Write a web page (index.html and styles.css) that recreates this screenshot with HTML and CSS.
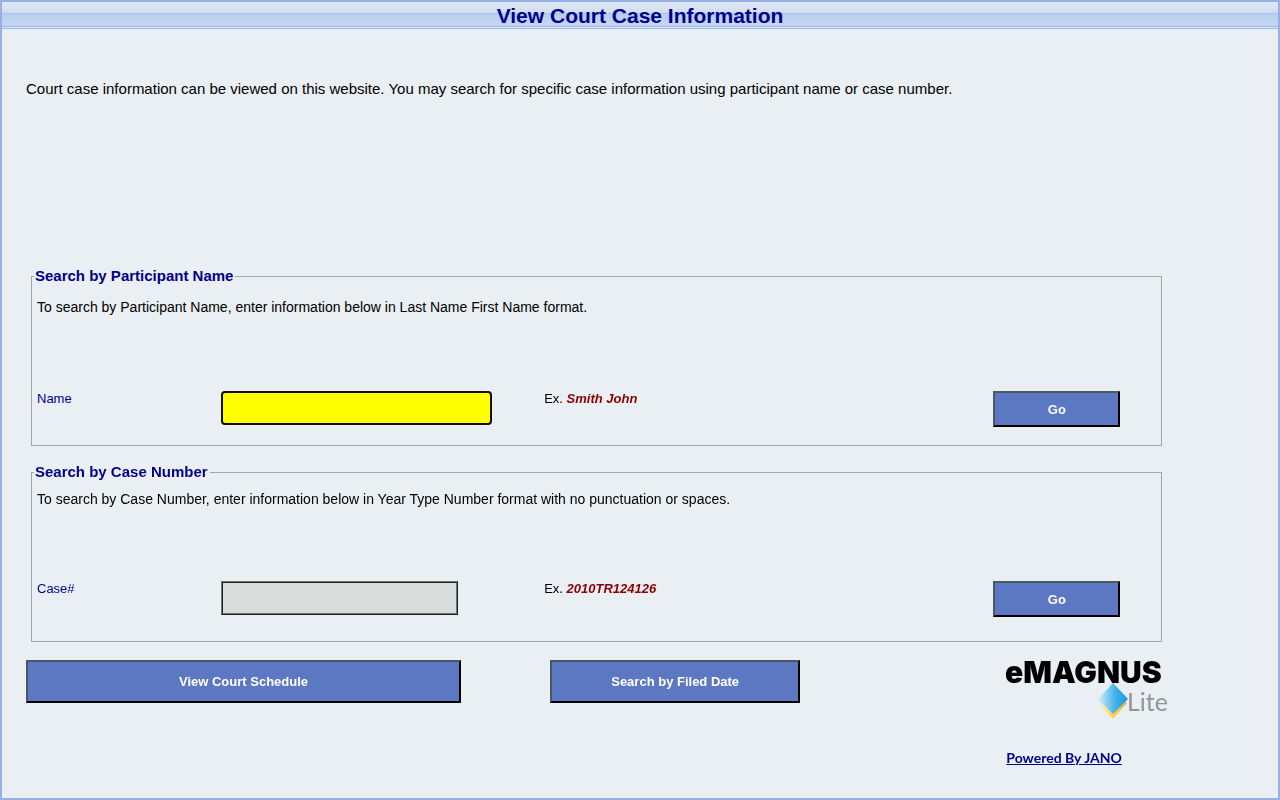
FILE: index.html
```html
<!DOCTYPE html>
<html lang="en">
<head>
    <meta charset="UTF-8">
    <meta name="viewport" content="width=device-width, initial-scale=1.0">
    <title>View Court Case Information</title>
    <link rel="stylesheet" href="styles.css">
</head>
<body>
    <div class="page">
        <header class="title-bar">
            <h1>View Court Case Information</h1>
        </header>
        <main class="content">
            <p class="intro">Court case information can be viewed on this website. You may search for specific case information using participant name or case number.</p>

            <form onsubmit="return false">
                <fieldset class="search">
                    <legend>Search by Participant Name</legend>
                    <p class="help">To search by Participant Name, enter information below in Last Name First Name format.</p>
                    <div class="row">
                        <label for="name">Name</label>
                        <input class="field name-field" type="text" id="name" autocomplete="off" autofocus>
                        <span>Ex. <em class="example">Smith John</em></span>
                        <button class="btn go" type="submit">Go</button>
                    </div>
                </fieldset>
            </form>

            <form onsubmit="return false">
                <fieldset class="search search-case">
                    <legend>Search by Case Number</legend>
                    <p class="help">To search by Case Number, enter information below in Year Type Number format with no punctuation or spaces.</p>
                    <div class="row">
                        <label for="case">Case#</label>
                        <input class="field case-field" type="text" id="case" autocomplete="off">
                        <span>Ex. <em class="example">2010TR124126</em></span>
                        <button class="btn go" type="submit">Go</button>
                    </div>
                </fieldset>
            </form>

            <div class="footer">
                <button class="btn schedule" type="button">View Court Schedule</button>
                <button class="btn filed" type="button">Search by Filed Date</button>
                <div class="brand">
                    <svg class="logo" width="164" height="65" viewBox="0 0 164 65" role="img" aria-label="eMAGNUS Lite">
                        <defs>
                            <linearGradient id="blue" x1="0" y1="0" x2="1" y2="0">
                                <stop offset="0" stop-color="#d9edf8"/>
                                <stop offset="0.55" stop-color="#45b5ee"/>
                                <stop offset="1" stop-color="#1496e4"/>
                            </linearGradient>
                            <linearGradient id="gold" x1="0" y1="0" x2="1" y2="0">
                                <stop offset="0" stop-color="#eaeff3"/>
                                <stop offset="0.5" stop-color="#ffd83c"/>
                                <stop offset="1" stop-color="#e5b84c"/>
                            </linearGradient>
                        </defs>
                        <path d="M107 27 L121 43 L107 59 L92 43 Z" fill="url(#gold)"/>
                        <path d="M107 23 L122 39 L107 54 L92 39 Z" fill="url(#blue)"/>
                        <text class="logo-name" x="-1" y="23">eMAGNUS</text>
                        <text class="logo-lite" x="121" y="51">Lite</text>
                    </svg>
                    <a class="powered" href="#">Powered By JANO</a>
                </div>
            </div>
        </main>
    </div>
</body>
</html>
```
FILE: styles.css
```css
* {
    box-sizing: border-box;
}

body {
    margin: 0;
    font-family: "Liberation Sans", Arial, sans-serif;
    font-size: 13px;
    line-height: 16px;
    color: #000;
    background-color: #eaeff3;
}

.page {
    min-height: 100vh;
    border: 2px solid #97afe5;
}

.title-bar {
    height: 27px;
    border-bottom: 3px double #99b5e5;
    background: linear-gradient(#dfe9f6 0, #cfdef1 11px, #a9c3ea 11px, #a9c3ea 12px, #b8cef0 12px, #c5d7f1 24px);
}

.title-bar h1 {
    margin: 0;
    font-size: 21px;
    line-height: 28px;
    text-align: center;
    color: #00008b;
}

.content {
    width: 90%;
    margin-left: 24px;
    padding-top: 50px;
}

.intro {
    margin: 0 0 168px;
    font-size: 15px;
    line-height: 20px;
}

.search {
    height: 179px;
    margin: 0 12px 17px 5px;
    padding: 0 5px;
    border: 1px solid #a0a8ac;
}

.search-case {
    margin-bottom: 18px;
}

.search legend {
    margin-left: -3px;
    padding: 0 2px 0 1px;
    font-size: 15px;
    line-height: 18px;
    font-weight: bold;
    color: #00008b;
}

.help {
    margin: 12px 0 74px;
    font-size: 14px;
    line-height: 20px;
}

.search-case .help {
    margin-top: 8px;
    margin-bottom: 72px;
}

.row {
    display: grid;
    grid-template-columns: 184fr 323fr 449fr 163fr;
    align-items: start;
}

.row label {
    color: #00008b;
}

.field {
    height: 34px;
    padding: 0 4px;
    font: inherit;
}

.name-field {
    width: 271px;
    border: 2px solid #101010;
    border-radius: 4px;
    outline: none;
    background-color: #ff0;
    caret-color: transparent;
}

.case-field {
    width: 237px;
    border: 2px ridge #6f7474;
    background-color: #d8dcdb;
}

.example {
    font-weight: bold;
    color: #8b0000;
}

.btn {
    padding: 0;
    border: 2px solid;
    border-color: #4d5663 #000 #000 #4d5663;
    font: bold 13px "Liberation Sans", Arial, sans-serif;
    color: #fff;
    background-color: #5d78c3;
    cursor: pointer;
}

.btn:hover {
    background-color: #4a66b5;
}

.go {
    width: 127px;
    height: 36px;
}

.footer {
    display: grid;
    grid-template-columns: 524fr 456fr 168fr;
    align-items: start;
}

.schedule {
    width: 435px;
    height: 43px;
}

.filed {
    width: 250px;
    height: 43px;
}

.brand {
    display: flex;
    flex-direction: column;
    align-items: flex-start;
    gap: 23px;
}

.logo {
    display: block;
    overflow: visible;
}

.logo-name {
    font: 900 30px Inter, sans-serif;
}

.logo-lite {
    font: 25px Lato, sans-serif;
    fill: #929497;
}

.powered {
    font: bold 14px "Trebuchet MS", Lato, sans-serif;
    line-height: 20px;
    color: #00008b;
}
```
